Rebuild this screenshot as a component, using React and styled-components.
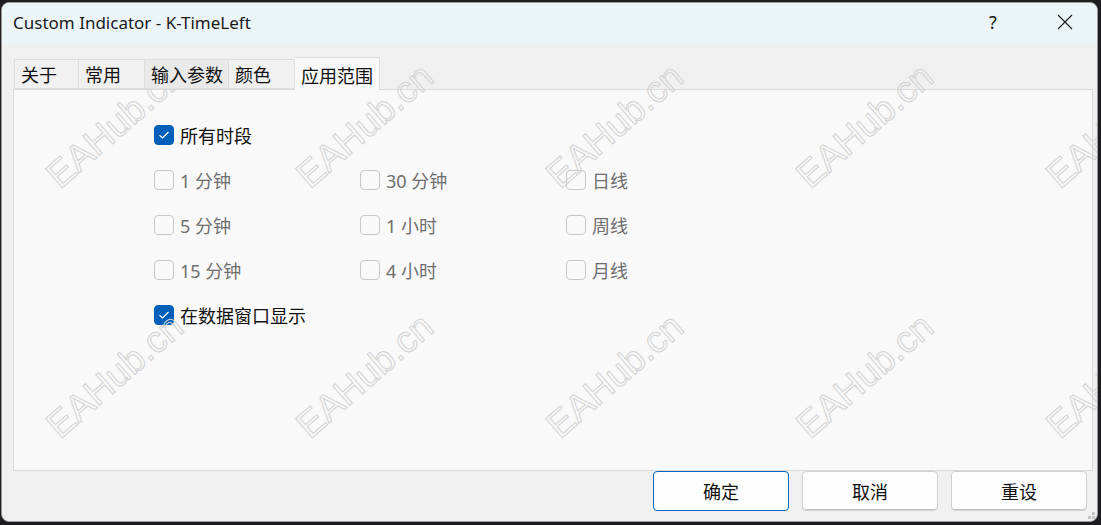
import React from 'react';
import styled, { createGlobalStyle } from 'styled-components';

const GlobalStyle = createGlobalStyle`
  html, body {
    margin: 0;
    padding: 0;
    background: #1d1d1f;
  }
  body {
    font-family: 'Noto Sans', 'Noto Sans CJK SC', sans-serif;
  }
  * {
    box-sizing: border-box;
  }
`;

const tabs = ['关于', '常用', '输入参数', '颜色', '应用范围'];

const periods = [
  '1 分钟', '30 分钟', '日线',
  '5 分钟', '1 小时', '周线',
  '15 分钟', '4 小时', '月线',
];

const marks = [];
for (let row = 0; row < 2; row++) {
  for (let col = 0; col < 5; col++) {
    marks.push({ x: 113 + col * 250, y: 123 + row * 250 });
  }
}

const Check = ({ checked, disabled, label }) => (
  <Option $disabled={disabled}>
    <Box $checked={checked}>
      {checked && (
        <svg width='12' height='10' viewBox='0 0 12 10'>
          <polyline points='1.5,5.2 4.5,8 10.5,2' fill='none' stroke='#fff' strokeWidth='1.2' />
        </svg>
      )}
    </Box>
    {label}
  </Option>
);

export default function App() {
  return (
    <>
      <GlobalStyle />
      <Screen>
        <Window>
          <TitleBar>
            <Title>Custom Indicator - K-TimeLeft</Title>
            <Help>?</Help>
            <CloseBtn>
              <svg width='16' height='16' viewBox='0 0 16 16'>
                <path d='M1 1 L15 15 M15 1 L1 15' stroke='#1a1a1a' strokeWidth='1.1' fill='none' />
              </svg>
            </CloseBtn>
          </TitleBar>
          <Body>
            <TabRow>
              {tabs.map((t, i) => (
                <Tab key={t} $active={i === 4} $hover={i === 2}>{t}</Tab>
              ))}
            </TabRow>
            <Panel>
              <Check checked label='所有时段' />
              <PeriodGrid>
                {periods.map((p) => (
                  <Check key={p} disabled label={p} />
                ))}
              </PeriodGrid>
              <Check checked label='在数据窗口显示' />
            </Panel>
            <Footer>
              <Button $primary>确定</Button>
              <Button>取消</Button>
              <Button>重设</Button>
            </Footer>
          </Body>
          <Grip>
            <svg width='8' height='8' viewBox='0 0 8 8'>
              <rect x='4' y='0' width='3' height='3' fill='#c4c4c4' />
              <rect x='0' y='4' width='3' height='3' fill='#c4c4c4' />
              <rect x='4' y='4' width='3' height='3' fill='#c4c4c4' />
            </svg>
          </Grip>
          <Marks>
            {marks.map((m, i) => (
              <Mark key={i} style={{ left: m.x, top: m.y }}>EAHub.cn</Mark>
            ))}
          </Marks>
        </Window>
      </Screen>
    </>
  );
}

const Screen = styled.div`
  width: 1101px;
  height: 525px;
  padding: 2px 3px 3px 1px;
`;

const Window = styled.div`
  position: relative;
  width: 100%;
  height: 100%;
  display: flex;
  flex-direction: column;
  background: #f0f0f0;
  border-radius: 8px;
  overflow: hidden;
  border: 1px solid #9a9a9a;
`;

const TitleBar = styled.div`
  height: 41px;
  flex: none;
  display: flex;
  align-items: center;
  background: #ebf4f7;
  padding-left: 11px;
`;

const Title = styled.div`
  flex: 1;
  font-size: 17px;
  color: #1a1a1a;
  padding-bottom: 2px;
`;

const Help = styled.div`
  width: 70px;
  text-align: center;
  font-size: 18px;
  color: #1a1a1a;
  padding-bottom: 3px;
  margin-right: -1px;
`;

const CloseBtn = styled.div`
  width: 70px;
  display: flex;
  justify-content: center;
  padding: 0 0 4px 5px;
`;

const Body = styled.div`
  flex: 1;
  display: flex;
  flex-direction: column;
  padding: 13px 4px 10px 11px;
`;

const TabRow = styled.div`
  display: flex;
  align-items: flex-end;
  height: 32px;
  padding-left: 1px;
  position: relative;
  z-index: 1;
`;

const Tab = styled.div`
  height: ${(p) => (p.$active ? '33px' : '30px')};
  min-width: 66px;
  padding: ${(p) => (p.$active ? '2px 6px 0 6px' : '0 5px 0 6px')};
  display: flex;
  align-items: center;
  font-size: 18px;
  color: #111;
  background: ${(p) => (p.$active ? '#f9f9f9' : p.$hover ? '#e9e9e9' : '#f0f0f0')};
  border: 1px solid #dedede;
  border-bottom: ${(p) => (p.$active ? 'none' : '1px solid #dedede')};
  margin-bottom: ${(p) => (p.$active ? '-1px' : '0')};
  & + & {
    border-left: none;
  }
  &:first-child {
    min-width: 65px;
  }
`;

const Panel = styled.div`
  height: 382px;
  flex: none;
  background: #f9f9f9;
  border: 1px solid #dadada;
  padding: 35px 0 0 140px;
  display: flex;
  flex-direction: column;
  gap: 25px;
`;

const PeriodGrid = styled.div`
  display: grid;
  grid-template-columns: repeat(3, 206px);
  row-gap: 25px;
`;

const Option = styled.div`
  height: 20px;
  display: flex;
  align-items: center;
  gap: 6px;
  font-size: 18px;
  color: ${(p) => (p.$disabled ? '#6e6e6e' : '#111')};
  white-space: nowrap;
`;

const Box = styled.span`
  width: 20px;
  height: 20px;
  flex: none;
  border-radius: 4px;
  display: flex;
  align-items: center;
  justify-content: center;
  background: ${(p) => (p.$checked ? '#005fb8' : '#f9f9f9')};
  border: 1px solid ${(p) => (p.$checked ? '#005fb8' : '#c8c8c8')};
`;

const Footer = styled.div`
  display: flex;
  justify-content: flex-end;
  gap: 13px;
  padding: 0 6px 0 0;
`;

const Button = styled.div`
  width: 136px;
  height: 40px;
  display: flex;
  align-items: center;
  justify-content: center;
  font-size: 18px;
  color: #111;
  background: #fdfdfd;
  border-radius: 4px;
  border: 1px solid ${(p) => (p.$primary ? '#0067c0' : '#d0d0d0')};
  box-shadow: ${(p) => (p.$primary ? 'none' : 'inset 0 -1px 0 #c4c4c4')};
`;

const Grip = styled.div`
  position: absolute;
  right: 1px;
  bottom: 1px;
  line-height: 0;
`;

const Marks = styled.div`
  position: absolute;
  inset: 41px 0 0 0;
  pointer-events: none;
  overflow: hidden;
`;

const Mark = styled.div`
  position: absolute;
  transform: translate(-50%, -50%) rotate(-41deg);
  margin-top: -41px;
  font-family: 'Liberation Sans', Arial, sans-serif;
  font-size: 37px;
  color: transparent;
  -webkit-text-stroke: 1px #d2d2d2;
  white-space: nowrap;
`;
